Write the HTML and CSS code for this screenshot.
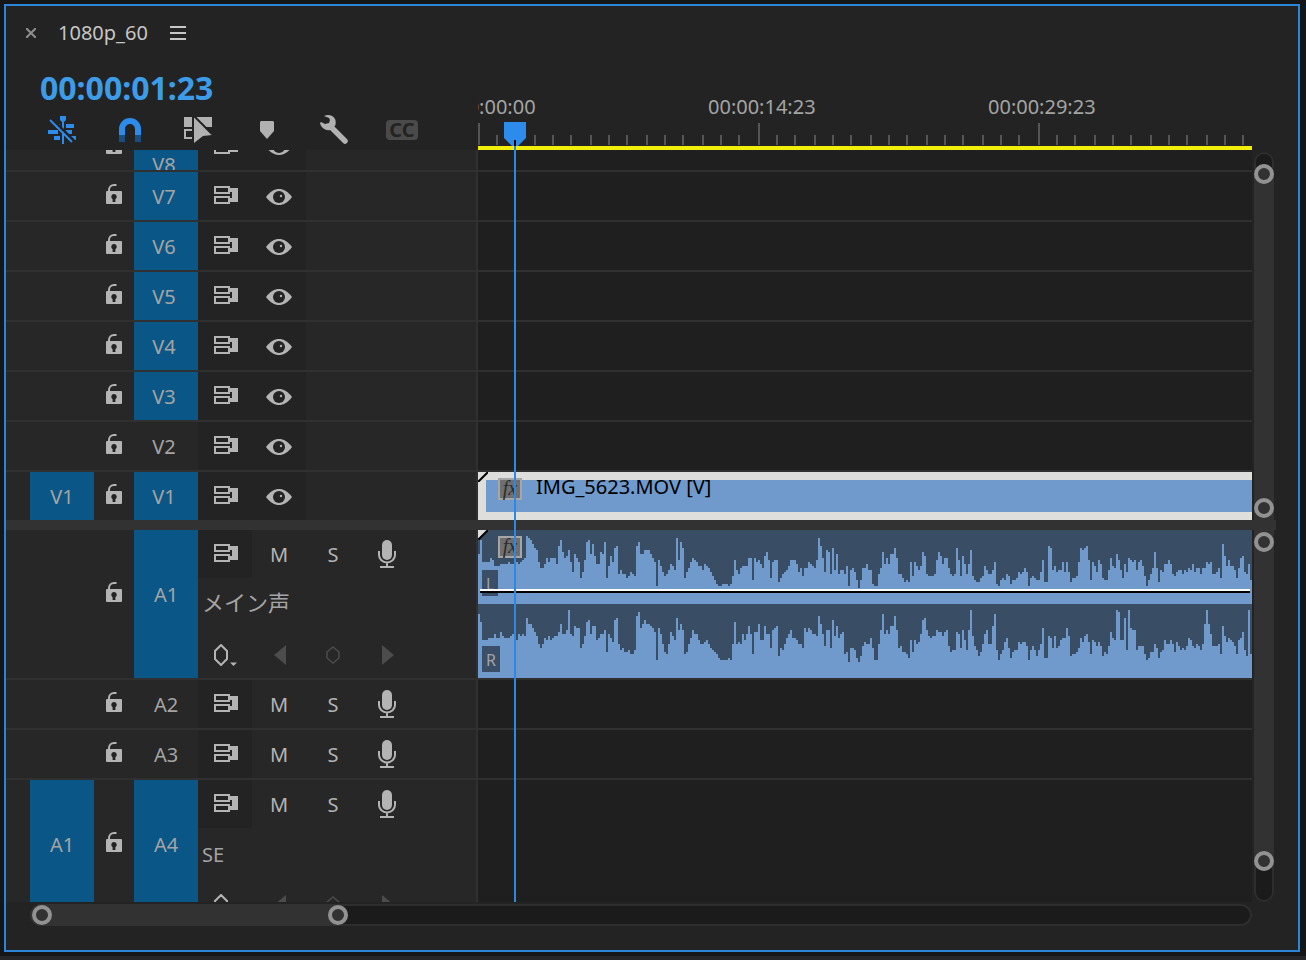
FILE: index.html
```html
<!DOCTYPE html>
<html lang="ja">
<head>
<meta charset="utf-8">
<title>1080p_60</title>
<link rel="stylesheet" href="styles.css">
</head>
<body>
<svg class="sprite" aria-hidden="true">
  <symbol id="lock" viewBox="0 0 16 20">
    <path d="M3 8V6a5 5 0 0 1 5-5h2.5" fill="none" stroke="currentColor" stroke-width="2"/>
    <rect y="7" width="16" height="13" rx="1" fill="currentColor"/>
    <path d="M8 10a2.8 2.8 0 0 1 1.4 5.2V18H6.6v-2.800A2.800 2.800 0 0 1 8 10z" fill="#232323"/>
  </symbol>
  <symbol id="sync" viewBox="0 0 24 18">
    <path d="M1 1h14v6H1zM1 11h14v6H1z" fill="none" stroke="currentColor" stroke-width="2"/>
    <path d="M15 2h9v14h-9v-4h3V6h-3z" fill="currentColor"/>
  </symbol>
  <symbol id="eye" viewBox="0 0 26 16">
    <path d="M0 8C4 2.500 8.500 0 13 0s9 2.500 13 8c-4 5.500-8.500 8-13 8S4 13.500 0 8z" fill="currentColor"/>
    <circle cx="13" cy="8" r="6" fill="#232323"/>
    <circle cx="15" cy="7" r="1.200" fill="currentColor"/>
  </symbol>
  <symbol id="mic" viewBox="0 0 18 28">
    <rect x="4" width="10" height="20" rx="5" fill="currentColor"/>
    <path d="M1 11v4a8 7.500 0 0 0 16 0v-4M9 23v4M2 27h14" fill="none" stroke="currentColor" stroke-width="2"/>
  </symbol>
  <symbol id="keyframe" viewBox="0 0 24 22">
    <path d="M8 1l6 6v8l-6 6-6-6V7z" fill="none" stroke="currentColor" stroke-width="2"/>
    <path d="M17 18.500h7l-3.500 3.500z" fill="currentColor"/>
  </symbol>
  <symbol id="prev" viewBox="0 0 12 20"><path d="M12 0v20L0 10z" fill="currentColor"/></symbol>
  <symbol id="next" viewBox="0 0 12 20"><path d="M0 0v20l12-10z" fill="currentColor"/></symbol>
  <symbol id="point" viewBox="0 0 14 18">
    <path d="M7 1l6 5v6l-6 5-6-5V6z" fill="none" stroke="currentColor" stroke-width="1.500"/>
  </symbol>
  <symbol id="fold" viewBox="0 0 10 10">
    <path d="M0 0h10L0 10z" fill="#dededc"/>
    <path d="M0 10L10 0" stroke="#000" stroke-width="2"/>
  </symbol>
</svg>

<main class="panel">
  <header class="tabbar">
    <button class="close" aria-label="Close"><svg width="10" height="10"><path d="M0 0l10 10M10 0L0 10" stroke="currentColor" stroke-width="2"/></svg></button>
    <h1 class="title">1080p_60</h1>
    <button class="menu" aria-label="Panel menu"><svg width="16" height="14"><path d="M0 1h16M0 7h16M0 13h16" stroke="currentColor" stroke-width="2"/></svg></button>
  </header>

  <section class="sequence">
    <div class="top">
      <div class="controls">
        <div class="timecode">00:00:01:23</div>
        <div class="toolbar">
          <button class="tool on" aria-label="Insert as nest"><svg width="28" height="28"><path d="M12 0h6v4l-2 2v22h-2V6l-2-2zM18 8h8v4h-8zM8 8h4v4H8zM0 14h10v4H0zM18 14h6v4h-6zM6 20h6v4H6zM20 20h8v4h-8z" fill="currentColor"/><path d="M4 3l22 22" stroke="#232323" stroke-width="3"/><path d="M2 4l22 22" stroke="currentColor" stroke-width="2"/></svg></button>
          <button class="tool on" aria-label="Snap"><svg width="22" height="24"><path d="M0 17v-6a11 11 0 0 1 22 0v6h-6v-6a5 5 0 0 0-10 0v6z" fill="currentColor"/><path d="M0 17h6v7H0zM16 17h6v7h-6z" fill="#184f80"/></svg></button>
          <button class="tool" aria-label="Linked selection"><svg width="28" height="28"><path d="M0 1h8v10H0zM11 1h17v10H11z" fill="currentColor"/><path d="M8 14H1v8h7" fill="none" stroke="currentColor" stroke-width="2"/><path d="M10 1l18 18-9 1-9 7z" fill="currentColor" /><path d="M10 0l18 18" stroke="#232323" stroke-width="2"/></svg></button>
          <button class="tool" aria-label="Add marker"><svg width="16" height="18"><path d="M3 0h12l1 1v9l-7 8-7-8V1z" fill="currentColor"/></svg></button>
          <button class="tool" aria-label="Timeline settings"><svg width="28" height="30"><path d="M11 12l14 14" stroke="currentColor" stroke-width="5.500" stroke-linecap="round"/><path d="M4 1C8-1 13 0 15 4c1 2 1 5 0 7l-5 4C6 16 1 13 0 8l1-1 4 2 4-1 1-3-1-2z" fill="currentColor"/></svg></button>
          <button class="tool" aria-label="Caption track options"><span class="cc">CC</span></button>
        </div>
      </div>
      <div class="ruler">
        <div class="labels"><span>00:00:00:00</span><span>00:00:14:23</span><span>00:00:29:23</span></div>
        <div class="ticks"></div>
      </div>
    </div>

    <div class="group video">
      <div class="tracks">
        <div class="track">
          <div class="head"><button class="cell lock" aria-label="Lock V8"><svg><use href="#lock"/></svg></button><button class="cell target on low">V8</button><button class="cell sync" aria-label="Sync V8"><svg><use href="#sync"/></svg></button><button class="cell eye" aria-label="Show V8"><svg><use href="#eye"/></svg></button></div>
          <div class="lane"></div>
        </div>
        <div class="track">
          <div class="head"><button class="cell lock" aria-label="Lock V7"><svg><use href="#lock"/></svg></button><button class="cell target on">V7</button><button class="cell sync" aria-label="Sync V7"><svg><use href="#sync"/></svg></button><button class="cell eye" aria-label="Show V7"><svg><use href="#eye"/></svg></button></div>
          <div class="lane"></div>
        </div>
        <div class="track">
          <div class="head"><button class="cell lock" aria-label="Lock V6"><svg><use href="#lock"/></svg></button><button class="cell target on">V6</button><button class="cell sync" aria-label="Sync V6"><svg><use href="#sync"/></svg></button><button class="cell eye" aria-label="Show V6"><svg><use href="#eye"/></svg></button></div>
          <div class="lane"></div>
        </div>
        <div class="track">
          <div class="head"><button class="cell lock" aria-label="Lock V5"><svg><use href="#lock"/></svg></button><button class="cell target on">V5</button><button class="cell sync" aria-label="Sync V5"><svg><use href="#sync"/></svg></button><button class="cell eye" aria-label="Show V5"><svg><use href="#eye"/></svg></button></div>
          <div class="lane"></div>
        </div>
        <div class="track">
          <div class="head"><button class="cell lock" aria-label="Lock V4"><svg><use href="#lock"/></svg></button><button class="cell target on">V4</button><button class="cell sync" aria-label="Sync V4"><svg><use href="#sync"/></svg></button><button class="cell eye" aria-label="Show V4"><svg><use href="#eye"/></svg></button></div>
          <div class="lane"></div>
        </div>
        <div class="track">
          <div class="head"><button class="cell lock" aria-label="Lock V3"><svg><use href="#lock"/></svg></button><button class="cell target on">V3</button><button class="cell sync" aria-label="Sync V3"><svg><use href="#sync"/></svg></button><button class="cell eye" aria-label="Show V3"><svg><use href="#eye"/></svg></button></div>
          <div class="lane"></div>
        </div>
        <div class="track">
          <div class="head"><button class="cell lock" aria-label="Lock V2"><svg><use href="#lock"/></svg></button><button class="cell target">V2</button><button class="cell sync" aria-label="Sync V2"><svg><use href="#sync"/></svg></button><button class="cell eye" aria-label="Show V2"><svg><use href="#eye"/></svg></button></div>
          <div class="lane"></div>
        </div>
        <div class="track last">
          <div class="head"><button class="cell source">V1</button><button class="cell lock" aria-label="Lock V1"><svg><use href="#lock"/></svg></button><button class="cell target on">V1</button><button class="cell sync" aria-label="Sync V1"><svg><use href="#sync"/></svg></button><button class="cell eye" aria-label="Show V1"><svg><use href="#eye"/></svg></button></div>
          <div class="lane">
            <div class="clip picture">
              <svg class="corner"><use href="#fold"/></svg>
              <span class="fx">fx</span><span class="clip-name">IMG_5623.MOV [V]</span>
            </div>
          </div>
        </div>
      </div>
      <div class="vbar"><div class="thumb"><button class="grip" aria-label="Video zoom top"></button><button class="grip" aria-label="Video zoom bottom"></button></div></div>
    </div>

    <div class="divider"></div>

    <div class="group audio">
      <div class="tracks">
        <div class="track tall">
          <div class="head">
            <button class="cell lock" aria-label="Lock A1"><svg><use href="#lock"/></svg></button><button class="cell target on">A1</button>
            <div class="details">
              <div class="strip"><button class="cell sync" aria-label="Sync A1"><svg><use href="#sync"/></svg></button><button class="cell">M</button><button class="cell">S</button><button class="cell mic" aria-label="Record A1"><svg><use href="#mic"/></svg></button></div>
              <div class="name kana">メイン声</div>
              <div class="strip dim"><button class="cell key" aria-label="Show keyframes"><svg><use href="#keyframe"/></svg></button><button class="cell step" aria-label="Previous keyframe"><svg><use href="#prev"/></svg></button><button class="cell point" aria-label="Add keyframe"><svg><use href="#point"/></svg></button><button class="cell step" aria-label="Next keyframe"><svg><use href="#next"/></svg></button></div>
            </div>
          </div>
          <div class="lane">
            <div class="clip sound">
              <svg class="wave" id="left" viewBox="0 0 387 37" preserveAspectRatio="none"></svg>
              <svg class="wave" id="right" viewBox="0 0 387 37" preserveAspectRatio="none"></svg>
              <svg class="corner"><use href="#fold"/></svg>
              <span class="fx">fx</span>
              <span class="channel left">L</span>
              <span class="channel right">R</span>
              <div class="volume"></div>
            </div>
          </div>
        </div>
        <div class="track">
          <div class="head"><button class="cell lock" aria-label="Lock A2"><svg><use href="#lock"/></svg></button><button class="cell target">A2</button><button class="cell sync" aria-label="Sync A2"><svg><use href="#sync"/></svg></button><button class="cell">M</button><button class="cell">S</button><button class="cell mic" aria-label="Record A2"><svg><use href="#mic"/></svg></button></div>
          <div class="lane"></div>
        </div>
        <div class="track">
          <div class="head"><button class="cell lock" aria-label="Lock A3"><svg><use href="#lock"/></svg></button><button class="cell target">A3</button><button class="cell sync" aria-label="Sync A3"><svg><use href="#sync"/></svg></button><button class="cell">M</button><button class="cell">S</button><button class="cell mic" aria-label="Record A3"><svg><use href="#mic"/></svg></button></div>
          <div class="lane"></div>
        </div>
        <div class="track tall">
          <div class="head">
            <button class="cell source">A1</button><button class="cell lock" aria-label="Lock A4"><svg><use href="#lock"/></svg></button><button class="cell target on">A4</button>
            <div class="details">
              <div class="strip"><button class="cell sync" aria-label="Sync A4"><svg><use href="#sync"/></svg></button><button class="cell">M</button><button class="cell">S</button><button class="cell mic" aria-label="Record A4"><svg><use href="#mic"/></svg></button></div>
              <div class="name">SE</div>
              <div class="strip dim"><button class="cell key" aria-label="Show keyframes"><svg><use href="#keyframe"/></svg></button><button class="cell step" aria-label="Previous keyframe"><svg><use href="#prev"/></svg></button><button class="cell point" aria-label="Add keyframe"><svg><use href="#point"/></svg></button><button class="cell step" aria-label="Next keyframe"><svg><use href="#next"/></svg></button></div>
            </div>
          </div>
          <div class="lane"></div>
        </div>
      </div>
      <div class="vbar"><div class="thumb"><button class="grip" aria-label="Audio zoom top"></button><button class="grip" aria-label="Audio zoom bottom"></button></div></div>
    </div>

    <div class="playhead"><svg width="22" height="24"><path d="M0 0h22v16l-8 8H8l-8-8z" fill="#2d8ceb"/><path d="M10 18h2v6h-2z" fill="#000"/></svg></div>
  </section>

  <div class="hbar"><div class="thumb"><button class="grip" aria-label="Zoom start"></button><button class="grip" aria-label="Zoom end"></button></div></div>
</main>
<div class="next-panel"></div>
<script src="wave.js"></script>
</body>
</html>
```

FILE: styles.css
```css
* {
  box-sizing: border-box;
}

body {
  display: flex;
  flex-direction: column;
  height: 100vh;
  margin: 0;
  overflow: hidden;
  background: #151617;
  color: #a4a4a4;
  font: 20px/24px "Noto Sans", "Noto Sans CJK JP", sans-serif;
}

button {
  padding: 0;
  border: 0;
  background: none;
  color: inherit;
  font: inherit;
}

svg {
  display: block;
}

.sprite {
  position: absolute;
  width: 0;
  height: 0;
}

.panel {
  flex: 1;
  min-height: 0;
  display: flex;
  flex-direction: column;
  margin: 4px 6px 4px 4px;
  border: 2px solid #2d85d8;
  background: #232323;
}

.next-panel {
  height: 4px;
  background: #262628;
}

.tabbar {
  display: flex;
  align-items: center;
  height: 54px;
  padding-left: 20px;
  color: #c6c6c6;
}

.close {
  color: #8f8f8f;
}

.title {
  margin: 0 22px;
  font-size: 20px;
  font-weight: 400;
}

.sequence {
  position: relative;
  flex: 1;
  min-height: 0;
  display: flex;
  flex-direction: column;
}

.top {
  display: flex;
  height: 90px;
}

.controls {
  width: 472px;
  padding: 6px 0 0 22px;
}

.timecode {
  padding-left: 12px;
  color: #3d9ce8;
  font-size: 32px;
  font-weight: 700;
  line-height: 44px;
}

.toolbar {
  display: flex;
  height: 40px;
}

.tool {
  width: 68px;
  display: grid;
  place-items: center;
  color: #b1b1b1;
}

.tool.on {
  color: #2d8ceb;
}

.cc {
  width: 32px;
  border-radius: 4px;
  background: #4a4a4a;
  color: #232323;
  font-size: 20px;
  font-weight: 700;
  line-height: 20px;
}

.ruler {
  flex: 1;
  display: flex;
  flex-direction: column;
  justify-content: flex-end;
  margin-right: 46px;
  overflow: hidden;
  border-bottom: 4px solid #f2ee0c;
}

.labels {
  display: flex;
  margin-left: -50px;
  padding-bottom: 4px;
}

.labels span {
  flex: 0 0 280px;
}

.ticks {
  height: 23px;
  background:
    repeating-linear-gradient(90deg, #555 0 2px, transparent 2px 280px) 0 0 / 100% 22px no-repeat,
    repeating-linear-gradient(90deg, #555 0 2px, transparent 2px 18px, #555 18px 20px, transparent 20px 36px, #555 36px 38px, transparent 38px 56px) 0 12px / 100% 10px no-repeat;
}

.group {
  display: flex;
  overflow: hidden;
}

.video {
  flex: 0 0 370px;
}

.audio {
  flex: 1;
  min-height: 0;
}

.tracks {
  flex: 1;
  display: flex;
  flex-direction: column;
}

.video .tracks {
  justify-content: flex-end;
}

.track {
  flex: none;
  display: flex;
  height: 50px;
  border-bottom: 2px solid #303030;
}

.track.last {
  height: 48px;
  border-bottom: 0;
}

.track.tall {
  height: 150px;
}

.head {
  width: 472px;
  display: flex;
  justify-content: flex-start;
  padding-left: 24px;
  border-right: 2px solid #303030;
  background: #272727;
}

.head > .lock:first-child {
  margin-left: 64px;
}

.lane {
  flex: 1;
  display: flex;
  background: #1f1f1f;
}

.cell {
  width: 54px;
  display: grid;
  place-items: center;
  padding-top: 2px;
  color: #b4b4b4;
}

.cell.source,
.cell.target {
  width: 64px;
  color: #a4a4a4;
}

.cell.target {
  padding-right: 4px;
}

.audio .cell.target {
  padding-right: 0;
}

.cell.source,
.cell.target.on {
  background: #0a5686;
}

.cell.low {
  padding-top: 38px;
  overflow: hidden;
  align-content: center;
}

.cell.lock {
  width: 40px;
  padding: 0 0 4px;
}

.tall .source,
.tall .target {
  padding-bottom: 20px;
}

.tall .cell.lock {
  padding-bottom: 24px;
}

.lock svg {
  width: 16px;
  height: 20px;
}

.sync,
.eye {
  background: #232323;
}

.cell.sync {
  padding: 0 0 2px 2px;
}

.sync svg {
  width: 24px;
  height: 18px;
}

.eye svg {
  width: 26px;
  height: 16px;
}

.cell.mic {
  padding-top: 0;
}

.mic svg {
  width: 18px;
  height: 28px;
}

.details {
  display: grid;
  grid-template-rows: 48px 52px 48px;
}

.strip {
  display: flex;
}

.name {
  padding: 2px 0 0 4px;
  line-height: 50px;
}

.kana {
  padding-top: 0;
  font-size: 22px;
  line-height: 48px;
}

.dim .cell {
  color: #4c4c4c;
}

.dim .key {
  color: #b4b4b4;
}

.key svg {
  width: 24px;
  height: 22px;
}

.cell.step {
  padding-left: 2px;
}

.step svg {
  width: 12px;
  height: 20px;
}

.point svg {
  width: 14px;
  height: 18px;
}

.clip {
  position: relative;
  flex: 1;
  min-width: 0;
}

.picture {
  display: flex;
  gap: 14px;
  padding-left: 12px;
  border: solid #dededc;
  border-width: 8px 0 8px 8px;
  background: #719acc;
  color: #000;
}

.picture .fx {
  margin-top: -2px;
}

.clip-name {
  margin-top: -5px;
}

.corner {
  position: absolute;
  top: 0;
  left: 0;
  width: 10px;
  height: 10px;
}

.picture .corner {
  top: -8px;
  left: -8px;
}

.fx {
  width: 24px;
  height: 22px;
  border: 2px solid #a6a6a6;
  background: #6f6f6f;
  color: #2c2c2c;
  font: italic 20px/16px "Liberation Serif", serif;
  text-align: center;
}

.sound {
  display: grid;
  grid-template-rows: 74px 74px;
  background: #394d65;
}

.wave {
  width: 100%;
  height: 74px;
  fill: #719acc;
  shape-rendering: crispEdges;
}

.sound .fx {
  position: absolute;
  top: 6px;
  left: 20px;
}

.channel {
  position: absolute;
  left: 4px;
  height: 26px;
  padding: 0 4px;
  background: #3b4e67;
  color: #a0a4a8;
  font-size: 16px;
  line-height: 28px;
}

.channel.left {
  top: 40px;
}

.channel.right {
  top: 116px;
}

.volume {
  position: absolute;
  top: 59px;
  left: 2px;
  right: 2px;
  height: 4px;
  border-top: 2px solid #fff;
  background: #000;
}

.divider {
  height: 10px;
  margin-right: 22px;
  background: #323232;
}

.vbar {
  width: 20px;
  display: flex;
  flex-direction: column;
  margin: 0 24px 0 2px;
  background: #1b1b1b;
  box-shadow: inset 0 0 0 2px #2e2e2e;
}

.video .vbar {
  margin-top: 2px;
  padding-top: 12px;
  border-radius: 10px 10px 0 0;
}

.audio .vbar {
  padding-bottom: 31px;
  border-radius: 0 0 10px 10px;
}

.thumb {
  display: flex;
  justify-content: space-between;
  background: #323232;
}

.vbar .thumb {
  flex: 1;
  flex-direction: column;
}

.video .thumb {
  padding-bottom: 2px;
  border-radius: 10px 10px 0 0;
}

.audio .thumb {
  padding-top: 2px;
  border-radius: 0 0 10px 10px;
}

.grip {
  width: 20px;
  height: 20px;
  border: 4px solid #929292;
  border-radius: 50%;
}

.hbar {
  display: flex;
  height: 22px;
  margin: 2px 46px 24px 24px;
  border-radius: 11px;
  background: #1b1b1b;
  box-shadow: inset 0 0 0 2px #2e2e2e;
}

.hbar .thumb {
  width: 26%;
  align-items: center;
  padding-left: 2px;
  border-radius: 11px;
}

.playhead {
  position: absolute;
  top: 62px;
  bottom: 0;
  left: 498px;
  width: 22px;
  background: linear-gradient(#2f87e0, #2f87e0) 10px 24px / 2px 100% no-repeat;
}
```

FILE: wave.js
```js
// Each character is the depth of silence above one peak, in base 36.
const channels = {
  left: `
    c5ggggefii ihhhhghhgg hgfe34579a gjjhegeeeh 85bedaglce golf65c7dh hbc6oidg98
    mkmmonlmn8 6ccaaacegs filnmkhik4 f69oljgefg iikhijlnpr ssrrrsrnfk m
    jiiieepegf hjdbfogffq omlkifffhl jnjjghijf4 8elabm9kcm kkmiskjlpt pjjhkkrssm
    jbhehcc9em moqpqgngik ibdmnnnmfb dheejmnm9f ndhmhanpqq onikmmkgrs
    popmnrppol mljlsonopp lfqq89kilk kglglqoong 9a98fpgilf hoppkeijcf kohlefgfkg
    finspmjbjq klhhfhmnlk kmkljkhljj mjjghgmmlj o7difiikoj edlmhp`,
  right: `
    59iiihhhfh heghhhgfgi fgfg7aaceg kmkhigihgg eaffd3fgbc cmkg98fbbi hffdofhj87
    knmoonppn6 4ca8aabces cfkopkegi7 dadpokhdff ikkjikmnop rssssrsk9k j
    kfifbfpeea iibffmdcbq mnkhfdhhik kmcecdffg6 aflddm8gbh fepotmmnrt qljkkhmssk
    d5fdfbb6dm looprioikj f87dghggde egedlonnef mdind3glnq okfdkkb5ns
    pnjhmronnj kjjlsnlnqn kcrrghmgml ihhcgqppom hjgfjpijlj lqoplehi34 ii7n3cddnl
    llpsrookmr onikkikojl nmnlhilmkl nka3aflllk pbgjhijlpi henq3p`
};

for (const [id, data] of Object.entries(channels)) {
  const peaks = [...data.replace(/\s/g, "")].map(c => parseInt(c, 36));
  const path = document.createElementNS("http://www.w3.org/2000/svg", "path");
  path.setAttribute("d", "M0 37" + peaks.map((y, x) => `V${y}H${x + 1}`).join("") + "V37z");
  document.getElementById(id).append(path);
}
```
